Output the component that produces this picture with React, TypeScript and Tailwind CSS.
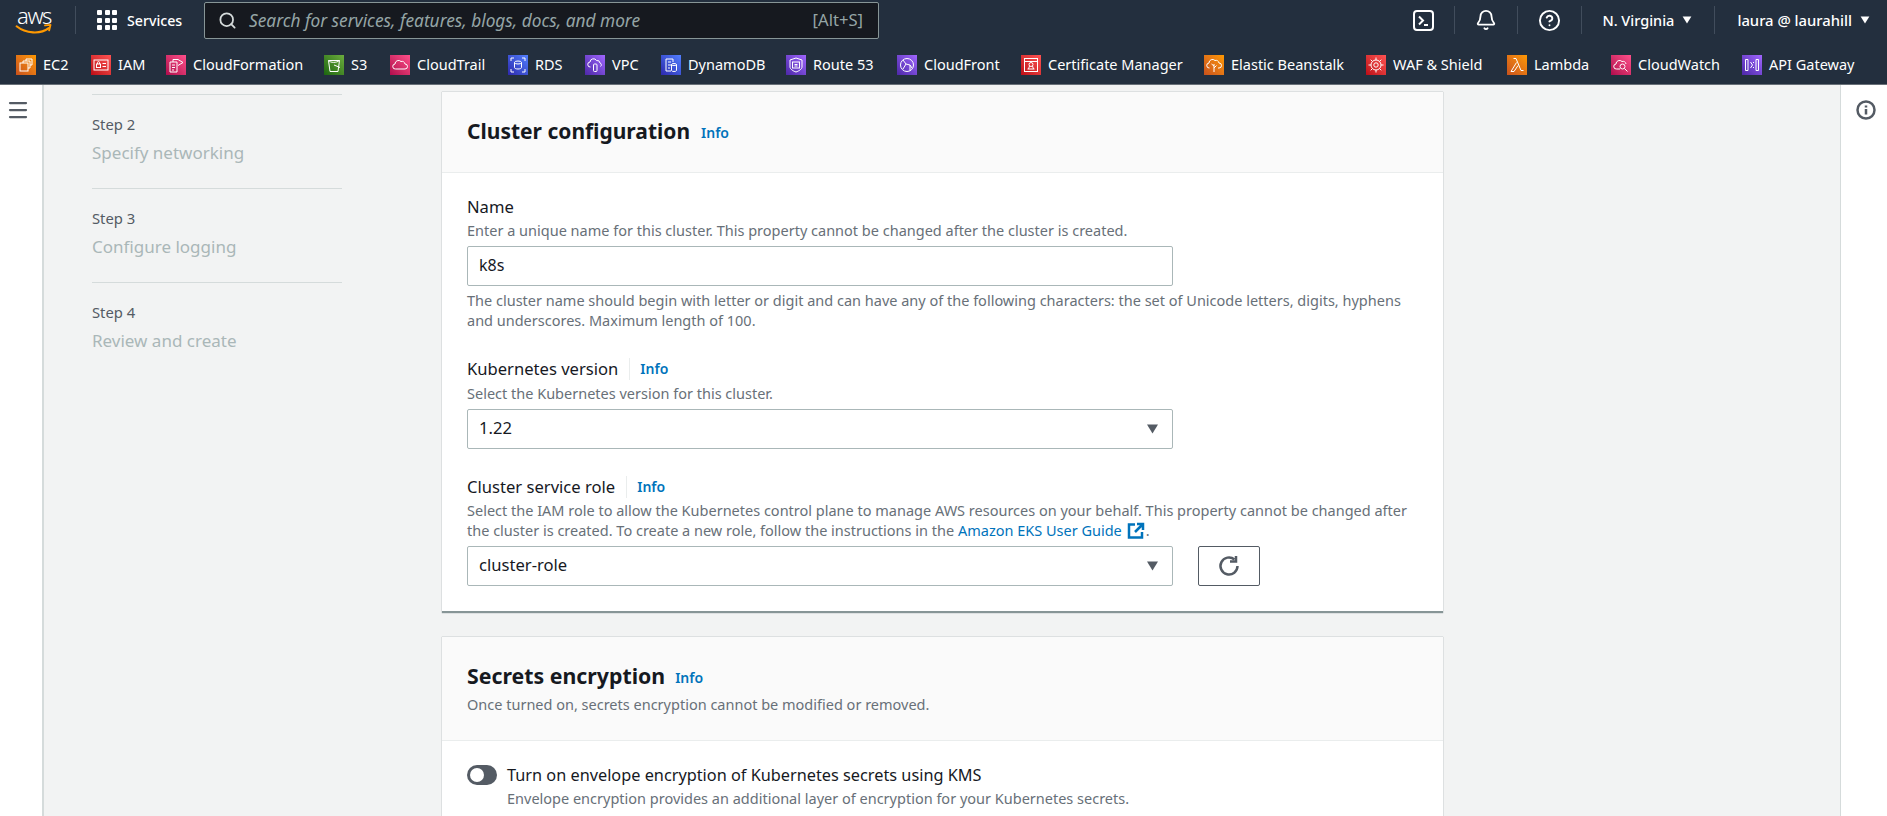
import { ReactNode } from "react";
import { Bell, CircleHelp, Menu, Search } from "lucide-react";

const font = "[font-family:'Noto_Sans',sans-serif]";

const glyphs: Record<string, ReactNode> = {
  ec2: (
    <>
      <rect x="4" y="8" width="8" height="8" />
      <path d="M7 8V6h7v7h-2M10 6V4h6v6h-2" />
    </>
  ),
  iam: (
    <>
      <rect x="3" y="5" width="14" height="10" />
      <rect x="5.500" y="9" width="4" height="3.500" />
      <path d="M6.500 9V7.600a1 1 0 0 1 2 0V9M11.500 8.500h3.500M11.500 11.500h3.500" />
    </>
  ),
  cfn: (
    <>
      <path d="M4 7h7v10H4zM6 10h3M6 12.500h3M6 15h2" />
      <path d="M7 7V4.500h5l5 3-5 3" />
    </>
  ),
  s3: (
    <>
      <path d="M4.500 5.500h11L14 16.500H6z" />
      <path d="M4.500 5.500c2 2.500 8 2.500 11 0M10 10l6 2.500" />
    </>
  ),
  trail: <path d="M5.500 14a2.500 2.500 0 0 1-.5-5 3.500 3.500 0 0 1 6-2.500 3 3 0 0 1 4 2.500 2.500 2.500 0 0 1 0 5z" />,
  rds: (
    <>
      <ellipse cx="10" cy="7.500" rx="3.500" ry="1.500" />
      <path d="M6.500 7.500v5c0 2 7 2 7 0v-5" />
      <path d="M3 6V3h3M14 3h3v3M3 14v3h3M14 17h3v-3" />
    </>
  ),
  vpc: (
    <>
      <path d="M5.500 12a2.500 2.500 0 0 1-.5-5 3.500 3.500 0 0 1 6.500-1.500 3 3 0 0 1 3.500 2.500 2 2 0 0 1 .5 3.500" />
      <rect x="8.500" y="9" width="3.500" height="7.500" rx="1" />
    </>
  ),
  ddb: (
    <>
      <path d="M5 4h7v3M5 4v12h5M7 7h3M7 10h3M7 13h2" />
      <ellipse cx="13" cy="9.500" rx="2.500" ry="1" />
      <path d="M10.500 9.500v6c0 1.300 5 1.300 5 0v-6" />
    </>
  ),
  r53: (
    <>
      <path d="M10 3l6 2v7c0 2-3 4-6 5-3-1-6-3-6-5V5z" />
      <rect x="6.500" y="7" width="7" height="6" />
      <path d="M8.500 9.500h3M8.500 11h3" />
    </>
  ),
  cf: (
    <>
      <circle cx="10" cy="10" r="6.500" />
      <path d="M6 5l3 4 4 1 2 3M9 9l-3 5M13 10v6" />
    </>
  ),
  acm: (
    <>
      <rect x="3.500" y="3.500" width="13" height="13" />
      <path d="M3.500 6.500h13M6.500 14h7" />
      <circle cx="10" cy="9.500" r="2" />
      <path d="M8.500 11l-1 3M11.500 11l1 3" />
    </>
  ),
  eb: (
    <>
      <path d="M5.500 13a2.500 2.500 0 0 1-.5-5 3.500 3.500 0 0 1 6-2.500 3 3 0 0 1 4 2.500 2.500 2.500 0 0 1 0 5h-1" />
      <path d="M10 17V9M10 11l-2.500-2M10 13l2.500-2.500" />
    </>
  ),
  waf: (
    <>
      <circle cx="10" cy="10" r="5" />
      <circle cx="10" cy="10" r="2.200" />
      <path d="M10 2.500V5M10 15v2.500M2.500 10H5M15 10h2.500M4.700 4.700l1.800 1.800M13.500 13.500l1.800 1.800M15.300 4.700l-1.800 1.800M6.500 13.500l-1.800 1.800" />
    </>
  ),
  lambda: <path d="M6.500 3.500h2.500l5 12h2.500M9.500 7.500L4 16.500h3l4-6" />,
  cw: (
    <>
      <path d="M9 14H5.500a2.500 2.500 0 0 1-.5-5 3.500 3.500 0 0 1 6-2.500 3 3 0 0 1 4 2.500" />
      <circle cx="11.500" cy="11.500" r="2.500" />
      <path d="M13.500 13.500l3 3" />
    </>
  ),
  api: (
    <>
      <path d="M3.500 4.500h2.500v11H3.500zM14 4.500h2.500v11H14z" />
      <path d="M8.500 7l2 3-2 3M12 7l-1 1M12 13l-1-1" />
    </>
  ),
};

const services = [
  { key: "ec2", label: "EC2", w: "w-[75px]", bg: "from-[#c8511b] to-[#ff9900]" },
  { key: "iam", label: "IAM", w: "w-[75px]", bg: "from-[#bd0816] to-[#ff5252]" },
  { key: "cfn", label: "CloudFormation", w: "w-[158px]", bg: "from-[#b0084d] to-[#ff4f8b]" },
  { key: "s3", label: "S3", w: "w-[66px]", bg: "from-[#1b660f] to-[#6cae3e]" },
  { key: "trail", label: "CloudTrail", w: "w-[118px]", bg: "from-[#b0084d] to-[#ff4f8b]" },
  { key: "rds", label: "RDS", w: "w-[77px]", bg: "from-[#2e27ad] to-[#527fff]" },
  { key: "vpc", label: "VPC", w: "w-[76px]", bg: "from-[#4d27a8] to-[#a166ff]" },
  { key: "ddb", label: "DynamoDB", w: "w-[125px]", bg: "from-[#2e27ad] to-[#527fff]" },
  { key: "r53", label: "Route 53", w: "w-[111px]", bg: "from-[#4d27a8] to-[#a166ff]" },
  { key: "cf", label: "CloudFront", w: "w-[124px]", bg: "from-[#4d27a8] to-[#a166ff]" },
  { key: "acm", label: "Certificate Manager", w: "w-[183px]", bg: "from-[#bd0816] to-[#ff5252]" },
  { key: "eb", label: "Elastic Beanstalk", w: "w-[162px]", bg: "from-[#c8511b] to-[#ff9900]" },
  { key: "waf", label: "WAF & Shield", w: "w-[141px]", bg: "from-[#bd0816] to-[#ff5252]" },
  { key: "lambda", label: "Lambda", w: "w-[104px]", bg: "from-[#c8511b] to-[#ff9900]" },
  { key: "cw", label: "CloudWatch", w: "w-[131px]", bg: "from-[#b0084d] to-[#ff4f8b]" },
  { key: "api", label: "API Gateway", w: "w-[125px]", bg: "from-[#4d27a8] to-[#a166ff]" },
];

const steps = [
  { step: "Step 2", title: "Specify networking" },
  { step: "Step 3", title: "Configure logging" },
  { step: "Step 4", title: "Review and create" },
];

function Caret({ className }: { className: string }) {
  return (
    <svg viewBox="0 0 12 10" className={className} fill="currentColor">
      <path d="M0.500 0.500h11L6 9.500z" />
    </svg>
  );
}

function Divider() {
  return <div className="h-7 w-px bg-[#414d5c]" />;
}

function Info() {
  return <span className="text-[14px] leading-5 font-semibold text-[#0073bb]">Info</span>;
}

function Field({ label, info, children }: { label: string; info?: boolean; children: ReactNode }) {
  return (
    <>
      <div className="flex h-[22px] items-center text-[16.6px] leading-[22px] text-[#16191f]">
        {label}
        {info && (
          <>
            <span className="mr-[10px] ml-[11px] h-[22px] w-px bg-[#eaeded]" />
            <Info />
          </>
        )}
      </div>
      {children}
    </>
  );
}

function SelectBox({ value }: { value: string }) {
  return (
    <div className="flex h-10 w-[706px] items-center justify-between rounded-[2px] border border-[#aab7b8] bg-white pr-[13px] pl-[11px] text-[16.6px] text-[#16191f]">
      <span className="mb-[2px]">{value}</span>
      <Caret className="h-[10px] w-[13px] text-[#545b64]" />
    </div>
  );
}

export default function App() {
  return (
    <div className={`flex h-[816px] w-[1887px] flex-col overflow-hidden bg-[#f2f3f3] ${font}`}>
      <header className="shrink-0 border-b border-[#687078] bg-[#232f3e] text-white">
        <div className="flex h-10 items-center">
          <div className="ml-[14px] flex w-[40px] flex-col items-center">
            <span className="h-5 text-[22px] leading-5 font-light tracking-[-1.5px]">aws</span>
            <svg viewBox="0 0 40 12" className="-mt-px h-[11px] w-[40px]" fill="none">
              <path d="M1 2.500c10 8 26 9 35 2" stroke="#ff9900" strokeWidth="2.250" strokeLinecap="round" />
              <path d="M32 1.500l6-.5-1.500 6" stroke="#ff9900" strokeWidth="2" strokeLinecap="round" strokeLinejoin="round" />
            </svg>
          </div>
          <div className="ml-[21px] h-7 w-px bg-[#414d5c]" />
          <div className="ml-[21px] grid grid-cols-3 gap-[2.500px]">
            {Array.from({ length: 9 }).map((_, i) => (
              <span key={i} className="h-[5px] w-[5px] rounded-[1px] bg-white" />
            ))}
          </div>
          <span className="mt-px ml-[10px] w-[56px] text-[14.200px] font-medium">Services</span>
          <div className="ml-[21px] flex h-[37px] w-[675px] items-center rounded-[2px] border border-[#879596] bg-[#16191f] pr-[15px] pl-[13px]">
            <Search className="h-[19px] w-[19px] text-[#d5dbdb]" strokeWidth={2.25} />
            <span className="mt-px ml-[12px] flex-1 text-[17.300px] text-[#95a5a6] italic">
              Search for services, features, blogs, docs, and more
            </span>
            <span className="mt-px text-[16.600px] text-[#95a5a6]">[Alt+S]</span>
          </div>
          <div className="ml-auto flex items-center">
            <svg viewBox="0 0 21 21" className="h-[21px] w-[21px]" fill="none" stroke="white" strokeWidth="2">
              <rect x="1" y="1" width="19" height="19" rx="3" />
              <path d="M6 6.500l4 4-4 4M11 15h4" />
            </svg>
            <div className="mx-5">
              <Divider />
            </div>
            <Bell className="h-[22px] w-[22px]" strokeWidth={2} />
            <div className="mx-5">
              <Divider />
            </div>
            <CircleHelp className="h-[23px] w-[23px]" strokeWidth={2} />
            <div className="mx-5">
              <Divider />
            </div>
            <span className="mt-px text-[14.500px] font-medium">N. Virginia</span>
            <Caret className="ml-2 h-2 w-[10px]" />
            <div className="mr-[22px] ml-[22px]">
              <Divider />
            </div>
            <span className="mt-px text-[14.800px] font-medium">laura @ laurahill</span>
            <Caret className="mr-[17px] ml-2 h-2 w-[10px]" />
          </div>
        </div>
        <div className="flex h-[44px] items-center pt-[6px] pl-4">
          {services.map((s) => (
            <div key={s.key} className={`flex shrink-0 items-center gap-[7px] ${s.w}`}>
              <span className={`h-5 w-5 bg-linear-to-tr ${s.bg}`}>
                <svg viewBox="0 0 20 20" className="h-5 w-5" fill="none" stroke="white" strokeWidth="1">
                  {glyphs[s.key]}
                </svg>
              </span>
              <span className="mb-[2px] text-[14.500px] leading-5 whitespace-nowrap">{s.label}</span>
            </div>
          ))}
        </div>
      </header>

      <div className="flex flex-1">
        <div className="flex w-[44px] shrink-0 justify-center border-r-2 border-[#d5dbdb] bg-white pt-[13px]">
          <Menu className="mr-[7px] h-[24px] w-[24px] text-[#545b64]" strokeWidth={2.25} />
        </div>

        <aside className="w-[398px] shrink-0 pt-[9px] pl-12">
          {steps.map((s) => (
            <div key={s.step} className="h-[94px] w-[250px] border-t border-[#d5dbdb] pt-[19px]">
              <div className="text-[14.800px] leading-5 text-[#545b64]">{s.step}</div>
              <div className="mt-[7px] text-[17px] leading-6 text-[#aab7b8]">{s.title}</div>
            </div>
          ))}
        </aside>

        <main className="w-[1001px] shrink-0 pt-[7px]">
          <section className="border-b-2 border-[#879596] bg-white shadow-[0_0_1px_rgba(0,28,36,0.5)]">
            <div className="flex h-[81px] items-center border-b border-[#eaeded] bg-[#fafafa] px-[25px] pb-[2px]">
              <h2 className="text-[21px] leading-[26px] font-bold text-[#16191f]">Cluster configuration</h2>
              <span className="mt-[2px] ml-[11px]">
                <Info />
              </span>
            </div>
            <div className="px-[25px] pt-[23px] pb-[25px]">
              <Field label="Name">
                <p className="mt-[2px] text-[14.500px] leading-5 text-[#687078]">
                  Enter a unique name for this cluster. This property cannot be changed after the cluster is created.
                </p>
                <div className="mt-[6px] flex h-10 w-[706px] items-center rounded-[2px] border border-[#aab7b8] bg-white px-[11px] text-[16px] text-[#16191f]">
                  <span className="mb-[2px]">k8s</span>
                </div>
                <p className="mt-[4px] text-[14.500px] leading-5 text-[#687078]">
                  The cluster name should begin with letter or digit and can have any of the following characters: the set of Unicode letters, digits, hyphens
                  <br />
                  and underscores. Maximum length of 100.
                </p>
              </Field>
              <div className="mt-[28px]">
                <Field label="Kubernetes version" info>
                  <p className="mt-[3px] text-[14.500px] leading-5 text-[#687078]">Select the Kubernetes version for this cluster.</p>
                  <div className="mt-[6px]">
                    <SelectBox value="1.22" />
                  </div>
                </Field>
              </div>
              <div className="mt-[27px]">
                <Field label="Cluster service role" info>
                  <p className="mt-[2px] text-[14.500px] leading-5 text-[#687078]">
                    Select the IAM role to allow the Kubernetes control plane to manage AWS resources on your behalf. This property cannot be changed after
                    <br />
                    the cluster is created. To create a new role, follow the instructions in the{" "}
                    <span className="text-[#0073bb]">Amazon EKS User Guide</span>
                    <svg viewBox="0 0 18 18" className="mr-px ml-[5px] inline-block h-[18px] w-[18px] align-[-4px]" fill="none" stroke="#0073bb" strokeWidth="2.500">
                      <path d="M8 2.500H2v13h13V10M10 2h6v6M16 2L8 10" />
                    </svg>
                    .
                  </p>
                  <div className="mt-[6px] flex items-center gap-[25px]">
                    <SelectBox value="cluster-role" />
                    <button className="flex h-10 w-[62px] items-center justify-center rounded-[2px] border border-[#545b64] bg-white">
                      <svg viewBox="0 0 22 22" className="h-[22px] w-[22px]" fill="none" stroke="#545b64" strokeWidth="2.500">
                        <path d="M16.500 4.500a8.500 8.500 0 1 0 3 6.500" />
                        <path d="M18 1v5.500h-6" />
                      </svg>
                    </button>
                  </div>
                </Field>
              </div>
            </div>
          </section>

          <section className="mt-[24px] bg-white pb-10 shadow-[0_0_1px_rgba(0,28,36,0.5)]">
            <div className="h-[104px] border-b border-[#eaeded] bg-[#fafafa] px-[25px] pt-[26px]">
              <div className="flex items-center">
                <h2 className="text-[21.300px] leading-[26px] font-bold text-[#16191f]">Secrets encryption</h2>
                <span className="mt-[2px] ml-[10px]">
                  <Info />
                </span>
              </div>
              <p className="mt-[5px] text-[14.500px] leading-5 text-[#687078]">Once turned on, secrets encryption cannot be modified or removed.</p>
            </div>
            <div className="flex gap-[10px] px-[25px] pt-[23px]">
              <div className="mt-px flex h-5 w-[30px] items-center rounded-full bg-[#545b64] pl-[3px]">
                <span className="h-[14px] w-[14px] rounded-full bg-white" />
              </div>
              <div>
                <div className="text-[16.300px] leading-[22px] text-[#16191f]">Turn on envelope encryption of Kubernetes secrets using KMS</div>
                <p className="mt-[2px] text-[14.500px] leading-5 text-[#687078]">Envelope encryption provides an additional layer of encryption for your Kubernetes secrets.</p>
              </div>
            </div>
          </section>
        </main>

        <div className="ml-auto flex w-[47px] shrink-0 justify-center border-l border-[#d5dbdb] bg-white pt-[15px] pl-[4px]">
          <svg viewBox="0 0 20 20" className="h-5 w-5" fill="none" stroke="#545b64" strokeWidth="2.500">
            <circle cx="10" cy="10" r="8.500" />
            <path d="M10 5.500v2M10 9v5.500" />
          </svg>
        </div>
      </div>
    </div>
  );
}
